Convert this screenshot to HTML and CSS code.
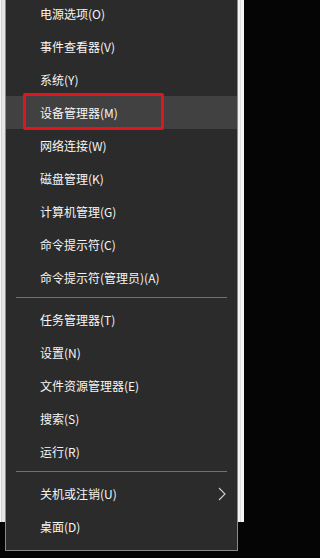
FILE: index.html
```html
<!DOCTYPE html>
<html lang="zh-CN">
<head>
<meta charset="utf-8">
<title>Win+X 菜单</title>
<link rel="stylesheet" href="styles.css">
</head>
<body>
<div class="menu">
  <div class="item">电源选项(O)</div>
  <div class="item">事件查看器(V)</div>
  <div class="item">系统(Y)</div>
  <div class="item active">设备管理器(M)<span class="mark"></span></div>
  <div class="item">网络连接(W)</div>
  <div class="item">磁盘管理(K)</div>
  <div class="item">计算机管理(G)</div>
  <div class="item">命令提示符(C)</div>
  <div class="item">命令提示符(管理员)(A)</div>
  <div class="sep"></div>
  <div class="item">任务管理器(T)</div>
  <div class="item">设置(N)</div>
  <div class="item">文件资源管理器(E)</div>
  <div class="item">搜索(S)</div>
  <div class="item">运行(R)</div>
  <div class="sep"></div>
  <div class="item sub"><span>关机或注销(U)</span>
    <svg class="chev" width="8" height="14" viewBox="0 0 8 14"><path d="M1 1 L7 7 L1 13" fill="none" stroke="#d0d0d0" stroke-width="1.1"/></svg>
  </div>
  <div class="item">桌面(D)</div>
</div>
</body>
</html>
```

FILE: styles.css
```css
html {
  margin: 0;
  padding: 0;
  background: #050505;
}
body {
  margin: 0;
  padding: 0;
  width: 244px;
  height: 558px;
  overflow: hidden;
  background:
    linear-gradient(to right, #f7f7f7 0 1px, #c9d1da 1px 2px, #e6e6e6 2px 5px, transparent 5px 238px, #f2f2f2 238px 240px, #dcdcdc 240px 241px, #f4f4f4 241px) top / 244px 522px no-repeat,
    #050505;
  font-family: "Noto Sans CJK SC", "Noto Sans", sans-serif;
  font-size: 12px;
  color: #f6f6f6;
}
.menu {
  margin: -3px 0 0 5px;
  width: 231px;
  background: #2b2b2b;
  border: 1px solid #8a8a8a;
  border-top: none;
  padding-bottom: 7px;
}
.item {
  position: relative;
  height: 33px;
  display: flex;
  align-items: center;
  padding-left: 34px;
  line-height: 1;
}
.item.active {
  background: #414141;
}
.mark {
  position: absolute;
  left: 17px;
  top: -3px;
  width: 135px;
  height: 31px;
  border: 3px solid #e3141c;
  border-radius: 2px;
}
.sep {
  height: 1px;
  background: #707070;
  margin: 3px 10px 5px 10px;
}
.item.sub {
  justify-content: space-between;
  padding-right: 11px;
}
.chev {
  display: block;
}
```
